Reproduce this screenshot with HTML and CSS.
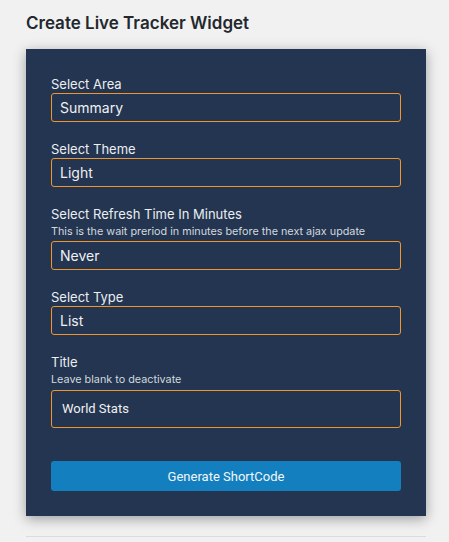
FILE: index.html
```html
<!DOCTYPE html>
<html lang="en">
<head>
<meta charset="utf-8">
<title>Create Live Tracker Widget</title>
<link rel="stylesheet" href="styles.css">
</head>
<body>
<div class="wrap">
  <h1 class="page-title">Create Live Tracker Widget</h1>
  <form class="card">
    <div class="field">
      <label class="label">Select Area</label>
      <div class="control">Summary</div>
    </div>
    <div class="field">
      <label class="label">Select Theme</label>
      <div class="control">Light</div>
    </div>
    <div class="field">
      <label class="label">Select Refresh Time In Minutes</label>
      <div class="hint">This is the wait preriod in minutes before the next ajax update</div>
      <div class="control">Never</div>
    </div>
    <div class="field">
      <label class="label">Select Type</label>
      <div class="control">List</div>
    </div>
    <div class="field field-title">
      <label class="label">Title</label>
      <div class="hint">Leave blank to deactivate</div>
      <div class="control control-text">World Stats</div>
    </div>
    <button type="button" class="btn">Generate ShortCode</button>
  </form>
  <hr class="rule">
</div>
</body>
</html>
```
FILE: styles.css
```css
html, body {
  margin: 0;
  padding: 0;
  background: #f1f1f1;
  font-family: Inter, "Noto Sans", sans-serif;
}
.wrap {
  padding: 12px 23px 0 26px;
}
.page-title {
  margin: 0 0 15px;
  font-size: 17px;
  line-height: 22px;
  font-weight: 600;
  color: #23282d;
}
.card {
  width: 400px;
  box-sizing: border-box;
  background: #233550;
  padding: 27px 25px 25px;
  box-shadow: 0 3px 12px rgba(0, 0, 0, 0.35);
}
.field {
  margin-bottom: 19px;
}
.field-title {
  margin-bottom: 33px;
}
.field-title .hint {
  margin-bottom: 2px;
}
.label {
  display: block;
  font-size: 13px;
  line-height: 17px;
  color: #eceef1;
}
.hint {
  font-size: 10.8px;
  line-height: 17px;
  margin-bottom: 1px;
  color: #d4d8de;
}
.control {
  box-sizing: border-box;
  height: 29px;
  border: 1px solid #f0962a;
  border-radius: 3px;
  padding: 0 8px;
  font-size: 14px;
  line-height: 27px;
  color: #f0f0f1;
}
.control-text {
  height: 38px;
  line-height: 36px;
  padding: 0 10px;
  font-family: Roboto, "Noto Sans", sans-serif;
  font-size: 13px;
}
.btn {
  display: block;
  width: 100%;
  height: 30px;
  border: 0;
  border-radius: 3px;
  background: #137fbe;
  color: #f2f6fa;
  font-family: Roboto, "Noto Sans", sans-serif;
  font-size: 13px;
  padding: 0;
}
.rule {
  width: 400px;
  margin: 20px 0 0;
  border: 0;
  border-top: 1px solid #dcdcde;
}
```
